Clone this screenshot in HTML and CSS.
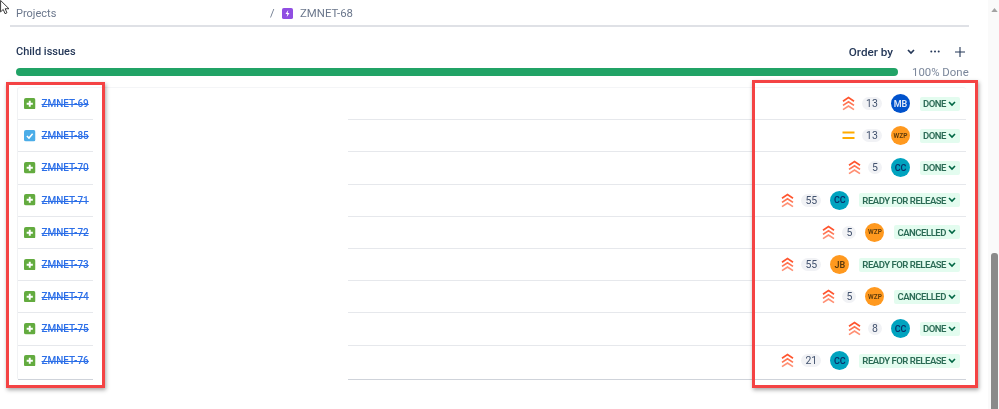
FILE: index.html
```html
<!DOCTYPE html>
<html lang="en">
<head>
<meta charset="utf-8">
<title>ZMNET-68</title>
<link rel="stylesheet" href="styles.css">
</head>
<body>
<svg width="0" height="0" class="defs">
  <defs>
    <symbol id="story" viewBox="0 0 12 12"><rect width="12" height="12" rx="2" fill="#63ab3f"/><path d="M6 2.8v6.4M2.8 6h6.4" stroke="#fff" stroke-width="2"/></symbol>
    <symbol id="task" viewBox="0 0 12 12"><rect width="12" height="12" rx="2" fill="#4bade8"/><path d="M3 6.2l2.2 2.2L9 4" stroke="#fff" stroke-width="1.6" fill="none"/></symbol>
    <symbol id="highest" viewBox="0 0 13 15"><g fill="none" stroke="#ff5630" stroke-width="1.7"><path d="M1 5.2l5.5-3.6 5.5 3.6"/><path d="M1 9.4l5.5-3.6 5.5 3.6" stroke="#ff7452"/><path d="M1 13.6l5.5-3.6 5.5 3.6" stroke="#ff8f73"/></g></symbol>
    <symbol id="medium" viewBox="0 0 13 15"><path d="M0.5 4.5h12M0.5 10h12" stroke="#ffab00" stroke-width="2"/></symbol>
    <symbol id="chev" viewBox="0 0 8 6"><path d="M1 1l3 3 3-3" fill="none" stroke="#006644" stroke-width="1.6"/></symbol>
  </defs>
</svg>

<div class="page">
  <main class="main">
    <nav class="crumbs">
      <span class="crumb-project">Projects</span>
      <span class="crumb-slash">/</span>
      <svg class="epic" viewBox="0 0 12 12"><rect width="12" height="12" rx="2" fill="#904ee2"/><path d="M6.8 2.2L3.8 6.6h2l-.6 3.2 3-4.4h-2z" fill="#fff"/></svg>
      <span class="crumb-key">ZMNET-68</span>
    </nav>

    <section class="panel">
      <header class="panel-head">
        <h2 class="panel-title">Child issues</h2>
        <span class="order">Order by</span>
        <svg class="order-chev" viewBox="0 0 8 6"><path d="M1 1l3 3 3-3" fill="none" stroke="#253858" stroke-width="1.7"/></svg>
        <svg class="dots" viewBox="0 0 10 3"><circle cx="1.3" cy="1.5" r="1" fill="#253858"/><circle cx="5" cy="1.5" r="1" fill="#253858"/><circle cx="8.7" cy="1.5" r="1" fill="#253858"/></svg>
        <svg class="plus" viewBox="0 0 10 10"><path d="M5 0v10M0 5h10" stroke="#253858" stroke-width="1.1"/></svg>
      </header>

      <div class="progress">
        <div class="bar"></div>
        <span class="percent">100% Done</span>
      </div>

      <div class="issues">
        <div class="row">
          <div class="cell-key"><svg class="type"><use href="#story"/></svg><a class="key">ZMNET-69</a></div>
          <div class="cell-meta"><svg class="prio"><use href="#highest"/></svg><span class="count wide">13</span><span class="avatar blue">MB</span><span class="status">DONE<svg class="chev"><use href="#chev"/></svg></span></div>
        </div>
        <div class="row">
          <div class="cell-key"><svg class="type"><use href="#task"/></svg><a class="key">ZMNET-85</a></div>
          <div class="cell-meta"><svg class="prio"><use href="#medium"/></svg><span class="count wide">13</span><span class="avatar orange small">WZP</span><span class="status">DONE<svg class="chev"><use href="#chev"/></svg></span></div>
        </div>
        <div class="row">
          <div class="cell-key"><svg class="type"><use href="#story"/></svg><a class="key">ZMNET-70</a></div>
          <div class="cell-meta"><svg class="prio"><use href="#highest"/></svg><span class="count">5</span><span class="avatar teal">CC</span><span class="status">DONE<svg class="chev"><use href="#chev"/></svg></span></div>
        </div>
        <div class="row">
          <div class="cell-key"><svg class="type"><use href="#story"/></svg><a class="key">ZMNET-71</a></div>
          <div class="cell-meta"><svg class="prio"><use href="#highest"/></svg><span class="count wide">55</span><span class="avatar teal">CC</span><span class="status">READY FOR RELEASE<svg class="chev"><use href="#chev"/></svg></span></div>
        </div>
        <div class="row">
          <div class="cell-key"><svg class="type"><use href="#story"/></svg><a class="key">ZMNET-72</a></div>
          <div class="cell-meta"><svg class="prio"><use href="#highest"/></svg><span class="count">5</span><span class="avatar orange small">WZP</span><span class="status">CANCELLED<svg class="chev"><use href="#chev"/></svg></span></div>
        </div>
        <div class="row">
          <div class="cell-key"><svg class="type"><use href="#story"/></svg><a class="key">ZMNET-73</a></div>
          <div class="cell-meta"><svg class="prio"><use href="#highest"/></svg><span class="count wide">55</span><span class="avatar orange">JB</span><span class="status">READY FOR RELEASE<svg class="chev"><use href="#chev"/></svg></span></div>
        </div>
        <div class="row">
          <div class="cell-key"><svg class="type"><use href="#story"/></svg><a class="key">ZMNET-74</a></div>
          <div class="cell-meta"><svg class="prio"><use href="#highest"/></svg><span class="count">5</span><span class="avatar orange small">WZP</span><span class="status">CANCELLED<svg class="chev"><use href="#chev"/></svg></span></div>
        </div>
        <div class="row">
          <div class="cell-key"><svg class="type"><use href="#story"/></svg><a class="key">ZMNET-75</a></div>
          <div class="cell-meta"><svg class="prio"><use href="#highest"/></svg><span class="count">8</span><span class="avatar teal">CC</span><span class="status">DONE<svg class="chev"><use href="#chev"/></svg></span></div>
        </div>
        <div class="row last">
          <div class="cell-key"><svg class="type"><use href="#story"/></svg><a class="key">ZMNET-76</a></div>
          <div class="cell-meta"><svg class="prio"><use href="#highest"/></svg><span class="count wide">21</span><span class="avatar teal">CC</span><span class="status">READY FOR RELEASE<svg class="chev"><use href="#chev"/></svg></span></div>
        </div>
      </div>
    </section>
  </main>

  <aside class="scrollbar">
    <svg class="scroll-up" viewBox="0 0 8 5"><path d="M4 0l4 5H0z" fill="#a3a3a3"/></svg>
    <div class="scroll-thumb"></div>
  </aside>
</div>

<div class="mark mark-left"></div>
<div class="mark mark-right"></div>
<svg class="cursor" viewBox="0 0 11 17"><path d="M.5.5v13l3-2.8 2 4.8 2.2-1-2-4.6h4.3z" fill="#fff" stroke="#222" stroke-width="1"/></svg>
</body>
</html>
```
FILE: styles.css
```css
* { box-sizing: border-box; }
html, body { margin: 0; height: 100%; overflow: hidden; background: #fff; }
body { font-family: "Roboto", "Open Sans", sans-serif; color: #253858; }
.defs { position: absolute; }

.page { display: flex; height: 409px; filter: blur(.3px); }
.main { width: 988px; padding: 0 19px 0 10px; flex: none; }

.crumbs {
  display: flex; align-items: center;
  height: 27px; padding: 1px 0 0 6px;
  border-bottom: 2px solid #dfe1e6;
  font-size: 11px; color: #6b778c;
}
.crumb-project { width: 254px; }
.crumb-slash { width: 12px; }
.epic { width: 11px; height: 11px; margin-right: 7px; }
.crumb-key { font-size: 11.4px; }

.panel { padding: 0 1px 0 6px; }
.panel-head { display: flex; align-items: center; height: 17px; margin-top: 16px; }
.panel-title { margin: 0; font-size: 11px; font-weight: 500; color: #253858; flex: 1; }
.order { font-size: 11.7px; font-weight: 500; }
.order-chev { width: 8px; height: 6px; margin-left: 14px; }
.dots { width: 10px; height: 3px; margin-left: 15px; }
.plus { width: 10px; height: 10px; margin-left: 15px; margin-right: 3px; }

.progress { display: flex; align-items: center; height: 8px; margin-top: 8px; }
.bar { width: 882px; height: 8px; border-radius: 4px; background: #21a366; flex: none; }
.percent { margin-left: 14px; font-size: 11.4px; white-space: nowrap; color: #7a869a; }

.issues {
  margin-top: 11px; margin-left: 1px; margin-right: 2px;
  border-top: 1px solid #f4f5f7;
  border-left: 1px solid #f1f2f4;
  border-radius: 3px;
}
.row { display: flex; height: 32.2px; }
.cell-key {
  display: flex; align-items: center;
  width: 75px; padding-left: 6px;
  border-bottom: 1px solid #e6e8ec;
  flex: none;
}
.cell-meta {
  display: flex; align-items: center; justify-content: flex-end;
  flex: 1; margin-left: 255px; padding-right: 6px;
  border-bottom: 1px solid #e6e8ec;
}
.row.last { height: 34px; }
.row.last .cell-key, .row.last .cell-meta { border-bottom-color: #cfd3da; padding-bottom: 3px; }

.type { width: 11.5px; height: 11.5px; margin-right: 6px; flex: none; }
.key { font-size: 10px; font-weight: 500; color: #2c6fe8; text-decoration: line-through; white-space: nowrap; }

.prio { width: 13px; height: 15px; margin-right: 7px; }
.count {
  display: flex; align-items: center; justify-content: center;
  width: 14px; height: 13px; border-radius: 7px;
  background: #f1f2f5; font-size: 10.5px; color: #42526e;
}
.count.wide { width: 20px; }
.avatar {
  display: flex; align-items: center; justify-content: center;
  width: 19px; height: 19px; border-radius: 50%;
  margin-left: 9px; margin-right: 10px;
  font-size: 9px; font-weight: 600; flex: none;
}
.avatar.blue { background: #0052cc; color: #dfe8f7; }
.avatar.teal { background: #00a3bf; color: #09326c; }
.avatar.orange { background: #ff991f; color: #5b3a0c; }
.avatar.small { font-size: 6.5px; }
.status {
  display: flex; align-items: center; justify-content: space-between;
  height: 14px; padding: 0 4px 0 3px;
  border-radius: 2px; background: #e3fcef;
  font-size: 9.5px; font-weight: 600; letter-spacing: -.46px; color: #2b6b55; white-space: nowrap;
}
.chev { width: 8px; height: 6px; margin-left: 2px; }

.scrollbar { flex: 1; display: flex; flex-direction: column; align-items: center; background: #fafafa; padding: 8px 0 0 2px; }
.scroll-up { width: 7px; height: 4px; }
.scroll-thumb { width: 7px; flex: 1; margin-top: 241px; background: #8a8a8a; border-radius: 3px 3px 0 0; }

.mark { position: absolute; border: 3px solid #f44344; box-shadow: 1px 2px 4px rgba(0,0,0,.35); pointer-events: none; }
.mark-left { left: 6px; top: 82px; width: 99px; height: 306px; }
.mark-right { left: 752px; top: 80px; width: 226px; height: 308px; }

.cursor { position: absolute; left: 0; top: 0; width: 10px; height: 15px; }
```
